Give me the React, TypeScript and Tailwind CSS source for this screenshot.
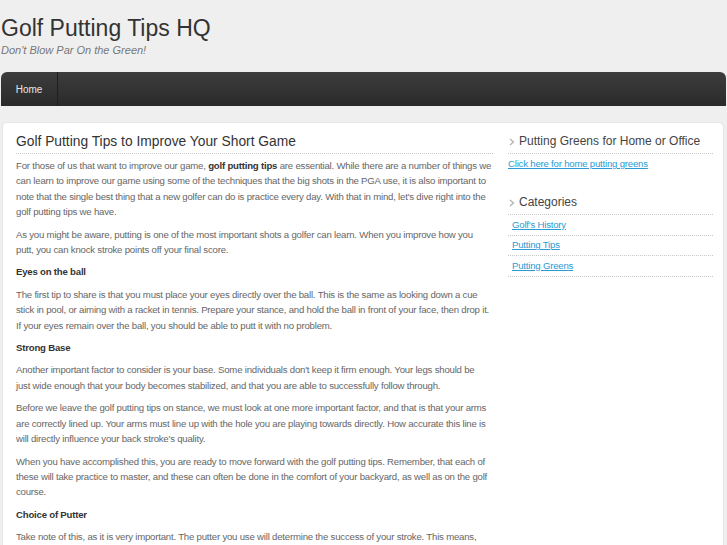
import React from "react";

const Arrow = () => (
  <svg width="6" height="8" viewBox="0 0 6 8" className="mr-[4px] mt-[1px] shrink-0">
    <path d="M1 1 L4.5 4 L1 7" fill="none" stroke="#b5b5b5" strokeWidth="1.4" />
  </svg>
);

export default function App() {
  return (
    <div
      className="w-[727px] h-[545px] overflow-hidden bg-[#efefef] text-[#666]"
      style={{ fontFamily: '"Liberation Sans", Arial, sans-serif' }}
    >
      <div className="pl-[1px] pt-[14px]">
        <h1 className="text-[23px] leading-[28px] text-[#333] font-normal">Golf Putting Tips HQ</h1>
        <p className="text-[11px] italic text-[#777] leading-[14px] mt-[1px]">Don't Blow Par On the Green!</p>
      </div>

      <div className="mt-[15px] ml-[1px] mr-[1px] h-[34px] rounded-t-[6px] bg-gradient-to-b from-[#3d3d3d] to-[#2a2a2a] flex">
        <div className="w-[57px] h-full border-r border-[#1f1f1f] flex items-center justify-center text-[10px] text-[#e6e6e6]">
          Home
        </div>
      </div>

      <div className="mt-[16px] ml-[2px] mr-[3px] h-[500px] bg-white rounded-[5px] border border-[#e6e6e6] flex pt-[10px]">
        <div className="ml-[13px] w-[477px] shrink-0 text-[9.6px] tracking-[-0.2px] leading-[15.4px] whitespace-nowrap">
          <h2 className="text-[13.8px] tracking-normal leading-[18px] text-[#333] pb-[2px] mb-[4px] border-b border-dotted border-[#c8c8c8]">
            Golf Putting Tips to Improve Your Short Game
          </h2>
          <p className="mb-[7px]">
            For those of us that want to improve our game, <b className="text-[#333]">golf putting tips</b> are essential. While there are a number of things we<br />
            can learn to improve our game using some of the techniques that the big shots in the PGA use, it is also important to<br />
            note that the single best thing that a new golfer can do is practice every day. With that in mind, let's dive right into the<br />
            golf putting tips we have.
          </p>
          <p className="mb-[7px]">
            As you might be aware, putting is one of the most important shots a golfer can learn. When you improve how you<br />
            putt, you can knock stroke points off your final score.
          </p>
          <p className="mb-[7px] font-bold text-[#333]">Eyes on the ball</p>
          <p className="mb-[7px]">
            The first tip to share is that you must place your eyes directly over the ball. This is the same as looking down a cue<br />
            stick in pool, or aiming with a racket in tennis. Prepare your stance, and hold the ball in front of your face, then drop it.<br />
            If your eyes remain over the ball, you should be able to putt it with no problem.
          </p>
          <p className="mb-[7px] font-bold text-[#333]">Strong Base</p>
          <p className="mb-[7px]">
            Another important factor to consider is your base. Some individuals don't keep it firm enough. Your legs should be<br />
            just wide enough that your body becomes stabilized, and that you are able to successfully follow through.
          </p>
          <p className="mb-[7px]">
            Before we leave the golf putting tips on stance, we must look at one more important factor, and that is that your arms<br />
            are correctly lined up. Your arms must line up with the hole you are playing towards directly. How accurate this line is<br />
            will directly influence your back stroke's quality.
          </p>
          <p className="mb-[7px]">
            When you have accomplished this, you are ready to move forward with the golf putting tips. Remember, that each of<br />
            these will take practice to master, and these can often be done in the comfort of your backyard, as well as on the golf<br />
            course.
          </p>
          <p className="mb-[7px] font-bold text-[#333]">Choice of Putter</p>
          <p className="mb-[7px]">
            Take note of this, as it is very important. The putter you use will determine the success of your stroke. This means,<br />
            when choosing a putter, you should take your time.
          </p>
        </div>

        <div className="ml-[15px] w-[205px] shrink-0 text-[9.6px] tracking-[-0.2px]">
          <h3 className="flex items-center text-[12px] tracking-normal leading-[16px] text-[#444] pl-[1px] pb-[4px] border-b border-dotted border-[#c8c8c8]">
            <Arrow />
            Putting Greens for Home or Office
          </h3>
          <a href="#" className="block mt-[3px] text-[#2b9bd6] underline leading-[14px]">
            Click here for home putting greens
          </a>

          <h3 className="mt-[23px] flex items-center text-[12px] tracking-normal leading-[16px] text-[#444] pl-[1px] pb-[4px] border-b border-dotted border-[#c8c8c8]">
            <Arrow />
            Categories
          </h3>
          <ul>
            {["Golf's History", "Putting Tips", "Putting Greens"].map((c) => (
              <li key={c} className="pl-[4px] h-[20.5px] flex items-center border-b border-dotted border-[#c8c8c8]">
                <a href="#" className="text-[#2b9bd6] underline leading-[14px]">{c}</a>
              </li>
            ))}
          </ul>
        </div>
      </div>
    </div>
  );
}
